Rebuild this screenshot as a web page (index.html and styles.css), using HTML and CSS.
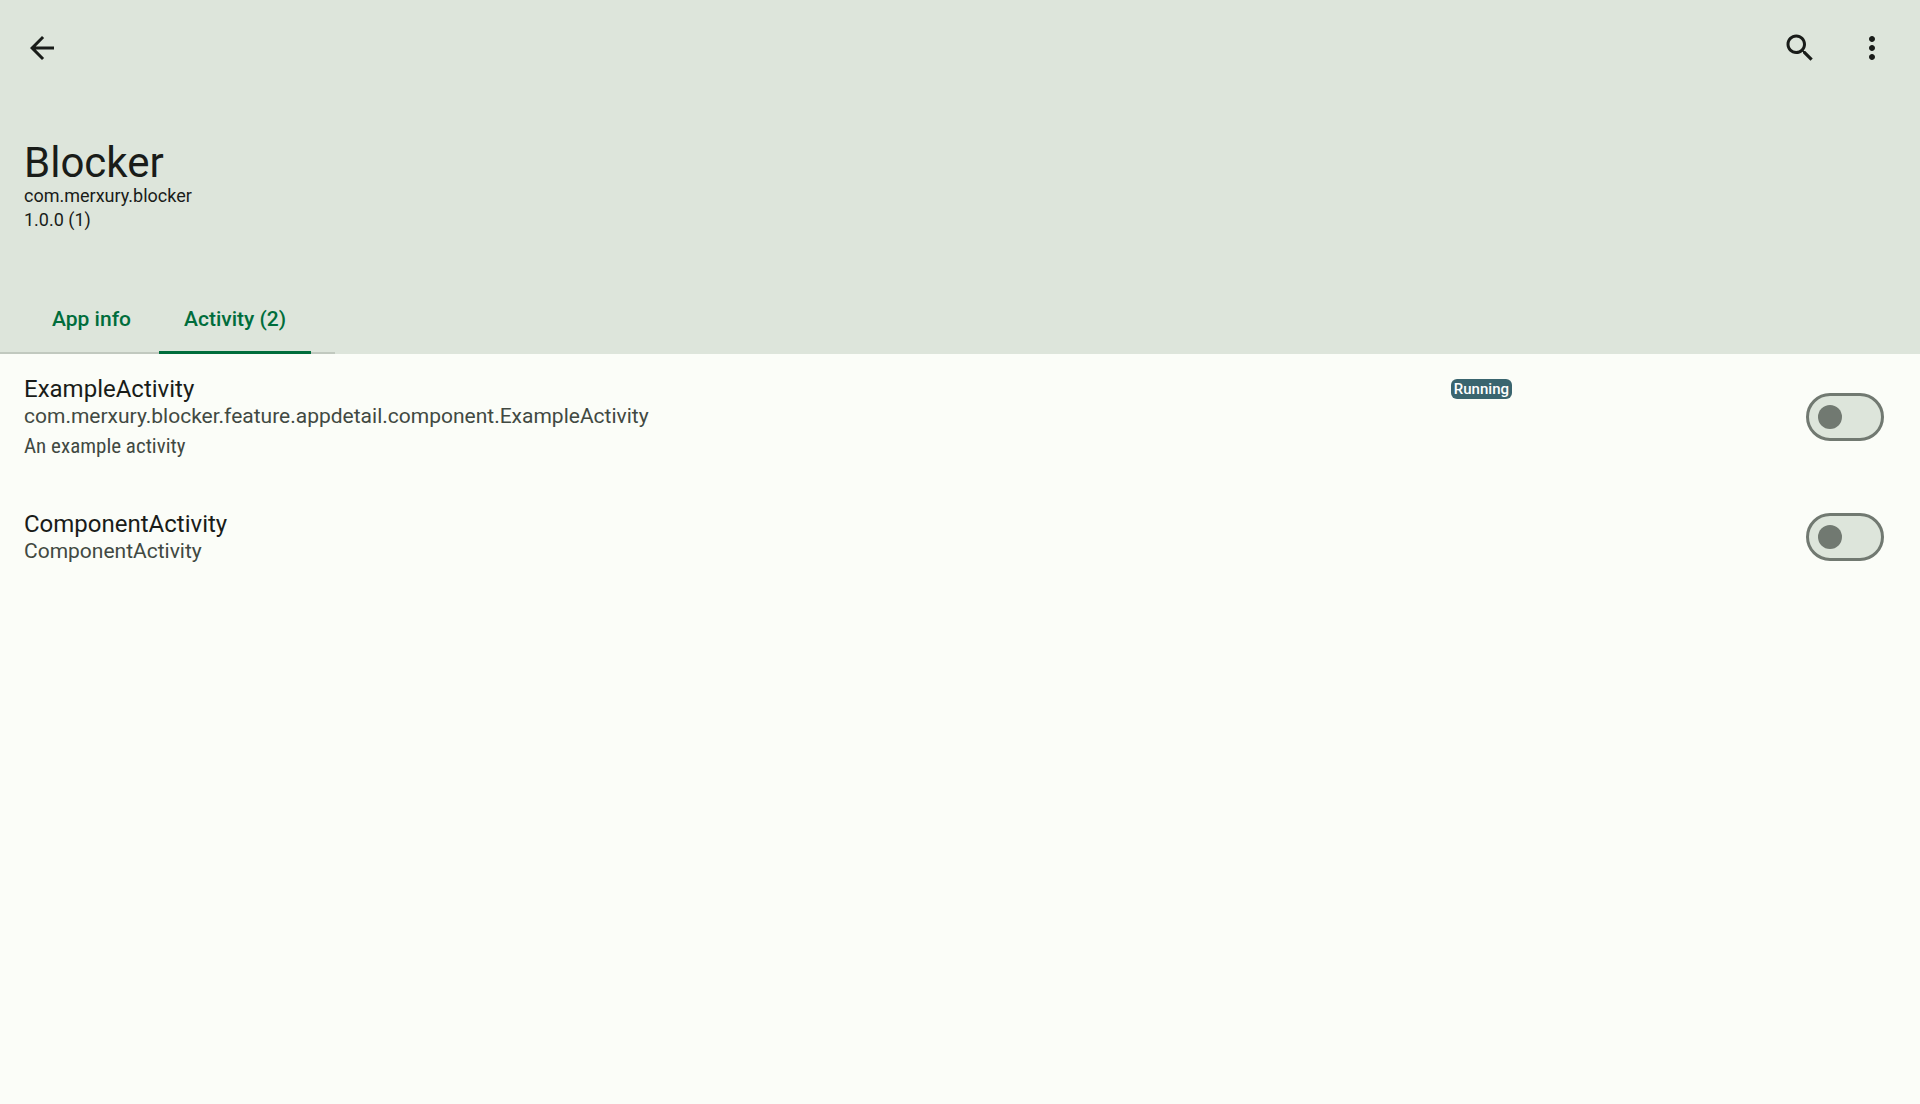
FILE: index.html
```html
<!DOCTYPE html>
<html lang="en">
<head>
<meta charset="utf-8">
<meta name="viewport" content="width=device-width, initial-scale=1">
<title>Blocker</title>
<link rel="stylesheet" href="styles.css">
</head>
<body>
<header class="header">
  <div class="toolbar">
    <button class="icon-button" type="button" aria-label="Back">
      <svg viewBox="0 0 24 24"><path d="M20 11H7.830l5.590-5.590L12 4l-8 8 8 8 1.410-1.410L7.830 13H20v-2z"/></svg>
    </button>
    <div class="actions">
      <button class="icon-button" type="button" aria-label="Search">
        <svg viewBox="0 0 24 24"><path d="M15.500 14h-.790l-.280-.270C15.410 12.590 16 11.110 16 9.500 16 5.910 13.090 3 9.500 3S3 5.910 3 9.500 5.910 16 9.500 16c1.610 0 3.090-.590 4.230-1.570l.270.280v.790l5 4.990L20.490 19l-4.990-5zm-6 0C7.010 14 5 11.990 5 9.500S7.010 5 9.500 5 14 7.010 14 9.500 11.990 14 9.500 14z"/></svg>
      </button>
      <button class="icon-button" type="button" aria-label="More options">
        <svg viewBox="0 0 24 24"><path d="M12 8c1.100 0 2-.900 2-2s-.900-2-2-2-2 .900-2 2 .900 2 2 2zm0 2c-1.100 0-2 .900-2 2s.900 2 2 2 2-.900 2-2-.900-2-2-2zm0 6c-1.100 0-2 .900-2 2s.900 2 2 2 2-.900 2-2-.900-2-2-2z"/></svg>
      </button>
    </div>
  </div>
  <div class="app">
    <h1 class="app-name">Blocker</h1>
    <p class="app-meta">com.merxury.blocker</p>
    <p class="app-meta">1.0.0 (1)</p>
  </div>
  <div class="tabs" role="tablist">
    <button class="tab" type="button" role="tab" aria-selected="false">App info</button>
    <button class="tab tab-selected" type="button" role="tab" aria-selected="true">Activity (2)</button>
  </div>
</header>
<main class="list">
  <section class="item">
    <div class="item-text">
      <div class="item-heading">
        <label class="item-title" for="example">ExampleActivity</label>
        <span class="badge">Running</span>
      </div>
      <p class="item-name">com.merxury.blocker.feature.appdetail.component.ExampleActivity</p>
      <p class="item-description">An example activity</p>
    </div>
    <div class="item-control"><input class="switch" type="checkbox" role="switch" id="example"></div>
  </section>
  <section class="item">
    <div class="item-text">
      <div class="item-heading">
        <label class="item-title" for="component">ComponentActivity</label>
      </div>
      <p class="item-name">ComponentActivity</p>
    </div>
    <div class="item-control"><input class="switch" type="checkbox" role="switch" id="component"></div>
  </section>
</main>
</body>
</html>
```
FILE: styles.css
```css
:root {
  --surface: #fbfdf8;
  --surface-variant: #dde5db;
  --on-surface: #191c19;
  --on-surface-variant: #414942;
  --outline: #717971;
  --outline-variant: #c1c9bf;
  --primary: #006d3c;
  --tertiary: #3a656f;
}

* { box-sizing: border-box; }

body {
  margin: 0;
  background: var(--surface);
  color: var(--on-surface);
  font-family: Roboto, "Liberation Sans", sans-serif;
}

h1, p { margin: 0; font-weight: 400; }

button {
  border: 0;
  padding: 0;
  background: none;
  color: inherit;
  font: inherit;
}

.header { background: var(--surface-variant); }

.toolbar {
  display: flex;
  justify-content: space-between;
  align-items: center;
  height: 96px;
  padding: 0 12px 0 6px;
}

.actions { display: flex; }

.icon-button {
  display: grid;
  place-items: center;
  width: 72px;
  height: 72px;
}

.icon-button svg {
  width: 36px;
  height: 36px;
  fill: currentColor;
}

.app { padding: 46px 24px 50px; }

.app-name { font-size: 42px; line-height: 42px; }

.app-meta { font-size: 18px; line-height: 24px; }

.tabs {
  display: flex;
  width: fit-content;
  height: 72px;
  padding: 0 24px;
  box-shadow: inset 0 -2px var(--outline-variant);
}

.tab {
  min-width: 135px;
  padding: 2px 25px 0;
  color: var(--primary);
  font-size: 21px;
  font-weight: 500;
}

.tab-selected { box-shadow: inset 0 -3px var(--primary); }

.list {
  display: grid;
  gap: 9px;
}

.item {
  display: flex;
  align-items: center;
  padding: 21px 36px 21px 24px;
}

.item-text { flex: 4 1 0; min-width: 0; }

.item-control {
  display: flex;
  flex: 1 1 0;
  justify-content: flex-end;
}

.item-heading {
  display: flex;
  justify-content: space-between;
  align-items: center;
}

.item-title { font-size: 24px; line-height: 28px; }

.item-name,
.item-description {
  color: var(--on-surface-variant);
  font-size: 21px;
  line-height: 26px;
}

.item-description {
  margin-top: 4px;
  font-family: "Roboto Condensed", Roboto, "Liberation Sans Narrow", sans-serif;
}

.badge {
  padding: 0 3px;
  border-radius: 6px;
  background: var(--tertiary);
  color: #fff;
  font-size: 15px;
  font-weight: 500;
  line-height: 20px;
}

.switch {
  appearance: none;
  display: flex;
  align-items: center;
  width: 78px;
  height: 48px;
  margin: 0;
  padding: 0 9px;
  border: 3px solid var(--outline);
  border-radius: 24px;
  background: var(--surface-variant);
}

.switch::before {
  content: "";
  width: 24px;
  height: 24px;
  border-radius: 50%;
  background: var(--outline);
}

.switch:checked {
  justify-content: flex-end;
  border-color: var(--primary);
  background: var(--primary);
}

.switch:checked::before { background: #fff; }
```
